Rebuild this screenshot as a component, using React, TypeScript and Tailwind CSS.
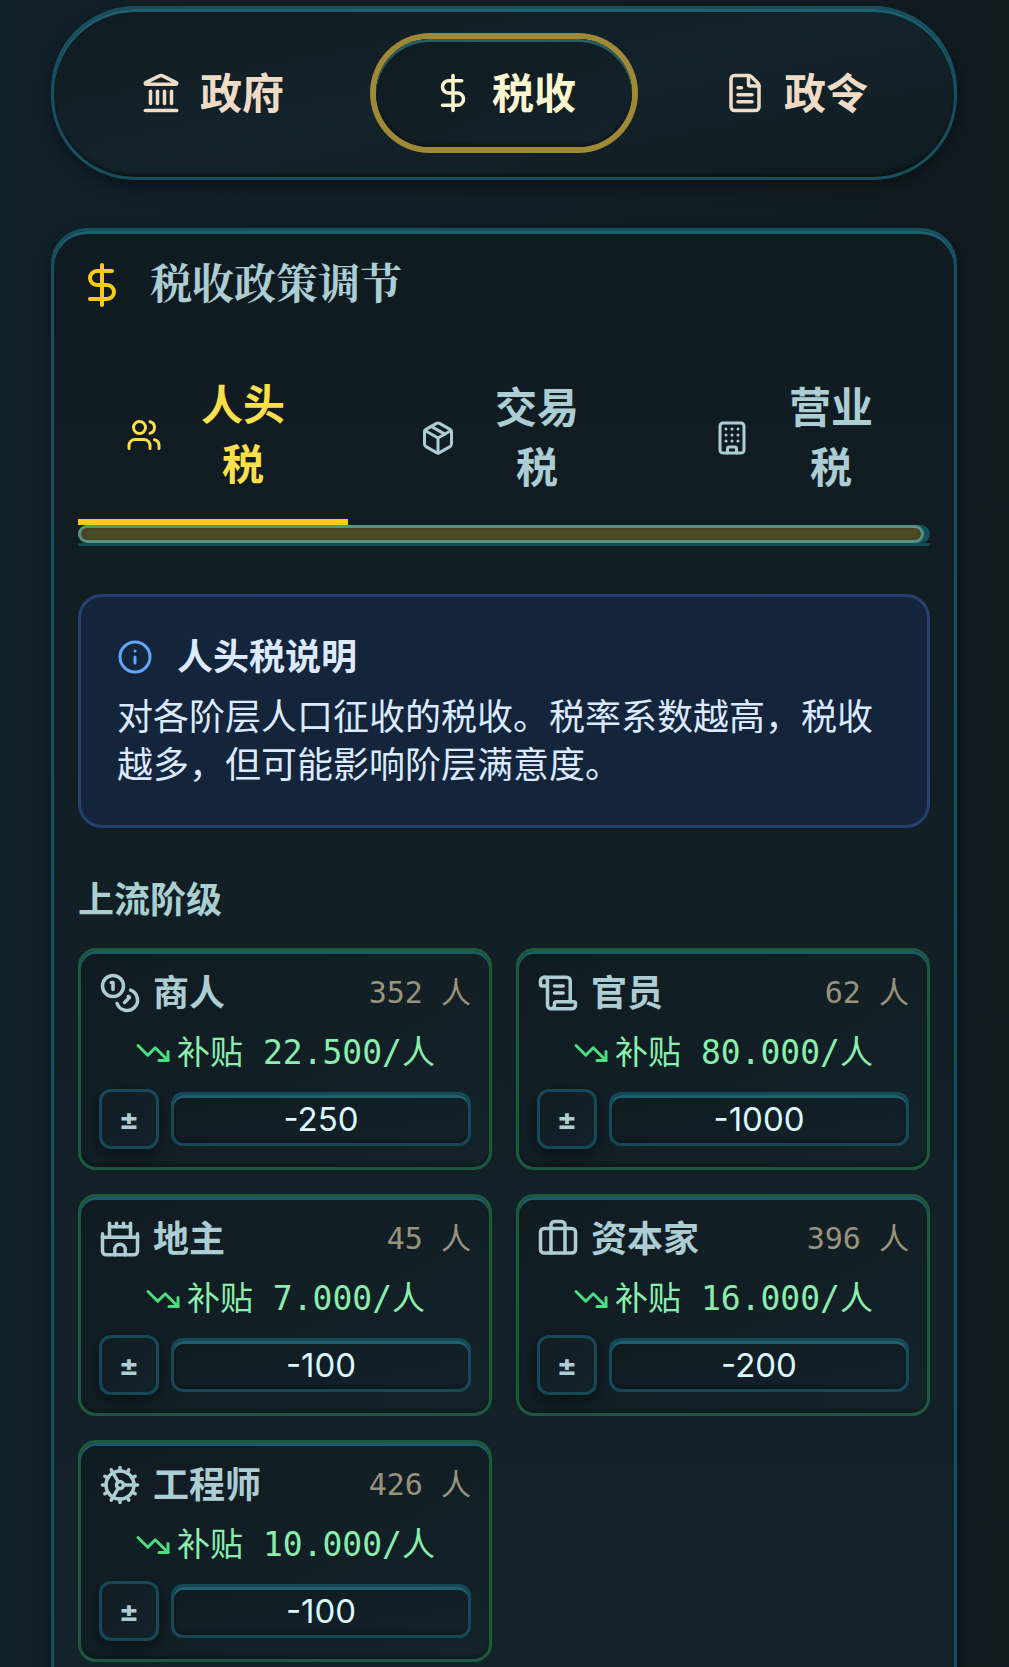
import { useState } from "react";
import {
  Building,
  Castle,
  Cog,
  Coins,
  DollarSign,
  FileText,
  Info,
  Landmark,
  Package,
  ScrollText,
  TrendingDown,
  Users,
  type LucideIcon,
} from "lucide-react";

type IconType = LucideIcon | typeof Suitcase;
type Stratum = { id: string; name: string; icon: IconType; count: number; subsidy: string; rate: string };

const SECTIONS: { id: string; label: string; icon: LucideIcon }[] = [
  { id: "government", label: "政府", icon: Landmark },
  { id: "tax", label: "税收", icon: DollarSign },
  { id: "decrees", label: "政令", icon: FileText },
];

const TAX_TABS: { id: string; label: string; icon: LucideIcon }[] = [
  { id: "head", label: "人头税", icon: Users },
  { id: "trade", label: "交易税", icon: Package },
  { id: "business", label: "营业税", icon: Building },
];

// briefcase with the handle running down through the body
function Suitcase({ size = 24 }: { size?: number | string }) {
  return (
    <svg
      width={size}
      height={size}
      viewBox="0 0 24 24"
      fill="none"
      stroke="currentColor"
      strokeWidth="2"
      strokeLinecap="round"
      strokeLinejoin="round"
      aria-hidden="true"
    >
      <rect x="2" y="6" width="20" height="14" rx="2" />
      <path d="M16 20V4a2 2 0 0 0-2-2h-4a2 2 0 0 0-2 2v16" />
    </svg>
  );
}

const UPPER_CLASS: Stratum[] = [
  { id: "merchant", name: "商人", icon: Coins, count: 352, subsidy: "22.500", rate: "-250" },
  { id: "official", name: "官员", icon: ScrollText, count: 62, subsidy: "80.000", rate: "-1000" },
  { id: "landowner", name: "地主", icon: Castle, count: 45, subsidy: "7.000", rate: "-100" },
  { id: "capitalist", name: "资本家", icon: Suitcase, count: 396, subsidy: "16.000", rate: "-200" },
  { id: "engineer", name: "工程师", icon: Cog, count: 426, subsidy: "10.000", rate: "-100" },
];

/** One social stratum with its head tax multiplier. */
function StratumCard({ stratum }: { stratum: Stratum }) {
  const [rate, setRate] = useState(stratum.rate);
  const Icon = stratum.icon;

  function flipSign() {
    setRate((prev) => (prev.startsWith("-") ? prev.slice(1) : `-${prev}`));
  }

  return (
    <div className="flex flex-col gap-3 rounded-[18px] border-3 border-[#1c5a3b] bg-linear-to-br from-[#101b21] to-[#13232a] p-[18px] shadow-[inset_0_3px_0_#1c5c6a,inset_0_-3px_3px_rgba(0,0,0,0.25)]">
      <div className="flex h-12 items-center justify-between">
        <label htmlFor={`rate-${stratum.id}`} className="flex items-center gap-3 text-4xl font-semibold text-[#abcdd3]">
          <Icon size={42} />
          {stratum.name}
        </label>
        <span className="font-['DejaVu_Sans_Mono','Noto_Sans_CJK_SC',monospace] text-3xl text-[#9a937c]">
          {stratum.count} 人
        </span>
      </div>
      <div className="flex h-12 items-center justify-center gap-1.5 text-[#4ade80]">
        <TrendingDown size={36} className="shrink-0" />
        <span className="font-['DejaVu_Sans_Mono','Noto_Sans_CJK_SC',monospace] text-[33px] whitespace-nowrap text-[#8beeae]">
          补贴 {stratum.subsidy}/人
        </span>
      </div>
      <div className="flex items-center gap-3">
        <button
          onClick={flipSign}
          aria-label="切换正负"
          className="size-[60px] shrink-0 rounded-xl border-3 border-[#154858] bg-linear-to-br from-[#111c22] to-[#13222a] text-3xl font-bold text-[#abcdd3] shadow-[0_6px_18px_rgba(0,0,0,0.45)]"
        >
          ±
        </button>
        <input
          id={`rate-${stratum.id}`}
          value={rate}
          onChange={(e) => setRate(e.target.value)}
          className="h-[54px] w-full min-w-0 rounded-xl border-3 border-[#154858] bg-linear-to-br from-[#101b20] to-[#13212a] text-center text-[33px] text-[#dbf8fc] shadow-[inset_0_3px_0_#1f6070,inset_0_-3px_3px_rgba(0,0,0,0.25)] outline-none"
        />
      </div>
    </div>
  );
}

export default function App() {
  const [section, setSection] = useState("tax");
  const [tab, setTab] = useState("head");

  return (
    <div className="flex min-h-screen flex-col gap-12 overflow-hidden bg-linear-to-r from-[#11212a] to-[#111b20] pt-1.5 pr-[52px] pl-[51px] font-['Inter','Noto_Sans_CJK_SC',sans-serif]">
      <nav className="flex gap-9 rounded-[84px] border-3 border-[#174f5f] bg-linear-to-br from-[#101b20] via-[#13232b] to-[#101b20] p-[30px] shadow-[0_6px_18px_rgba(0,0,0,0.4),inset_0_3px_0_#1d6070,inset_0_-3px_3px_rgba(0,0,0,0.35)]">
        {SECTIONS.map(({ id, label, icon: Icon }) => (
          <button
            key={id}
            onClick={() => setSection(id)}
            className={`flex h-[108px] flex-1 items-center justify-center gap-[18px] rounded-full text-[42px] font-bold ${
              section === id
                ? "bg-linear-to-br from-[#101b20] to-[#13232b] text-[#fdf6d0] shadow-[0_0_0_6px_#9f8836,inset_0_3px_0_#265f62,inset_0_-3px_3px_rgba(0,0,0,0.3)]"
                : "text-[#efdcc6]"
            }`}
          >
            <Icon size={42} />
            {label}
          </button>
        ))}
      </nav>

      <main className="rounded-t-[36px] border-3 border-b-0 border-[#174f5f] bg-linear-to-b from-[#101b21] to-[#13232a] px-6 pt-6 pb-12 shadow-[0_6px_18px_rgba(0,0,0,0.4),inset_0_3px_0_#1d6070]">
        <h1 className="flex h-[60px] items-center gap-6 font-['Liberation_Serif','Noto_Serif_CJK_SC','Noto_Sans_CJK_SC',serif] text-[42px] font-bold text-[#abcdd3]">
          <DollarSign size={48} className="text-[#facc15]" />
          税收政策调节
        </h1>

        <div className="mt-9 border-b-3 border-[#124c58]">
          <div className="flex gap-6 overflow-hidden" role="tablist">
            {TAX_TABS.map(({ id, label, icon: Icon }) => (
              <button
                key={id}
                role="tab"
                aria-selected={tab === id}
                onClick={() => setTab(id)}
                className={`flex min-w-[270px] flex-1 items-center gap-6 px-12 py-6 text-[42px] leading-[60px] font-semibold ${
                  tab === id ? "border-b-6 border-[#f5cb20] text-[#fbdf4b]" : "text-[#abcdd3]"
                }`}
              >
                <Icon size={36} className="shrink-0" />
                <span className="flex-1">{label}</span>
              </button>
            ))}
          </div>
          <div className="h-[18px] rounded-full bg-[#164f5f] pr-1.5">
            <div className="h-full rounded-full border-3 border-[#569283] bg-[#4e4d2a] shadow-[inset_0_0_6px_rgba(60,40,10,0.6)]" />
          </div>
        </div>

        <section className="mt-12 rounded-3xl border-3 border-[#244170] bg-[#14243b] p-9 text-4xl text-[#dbeafe]">
          <h2 className="flex h-12 items-center gap-6 font-semibold">
            <Info size={36} className="text-[#60a5fa]" />
            人头税说明
          </h2>
          <p className="mt-3 leading-12">对各阶层人口征收的税收。税率系数越高，税收越多，但可能影响阶层满意度。</p>
        </section>

        <h2 className="mt-12 text-4xl leading-12 font-semibold text-[#a9cfcf]">上流阶级</h2>
        <div className="mt-6 grid grid-cols-2 gap-6">
          {UPPER_CLASS.map((s) => (
            <StratumCard key={s.id} stratum={s} />
          ))}
        </div>
      </main>
    </div>
  );
}
